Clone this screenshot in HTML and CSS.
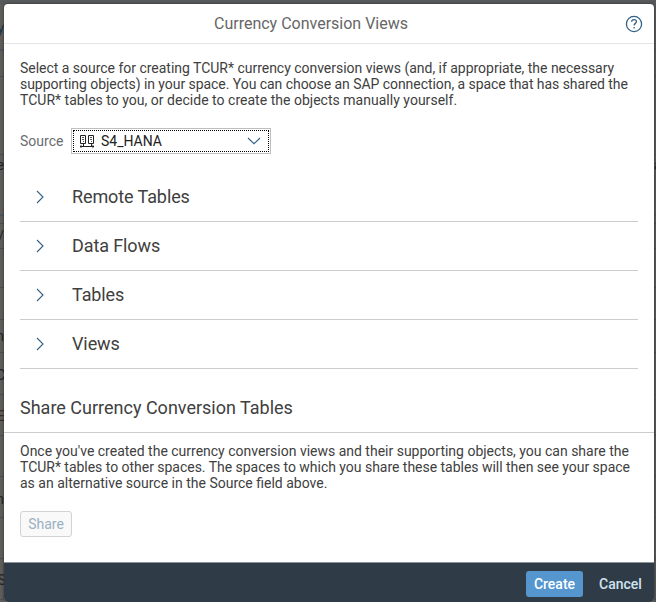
FILE: index.html
```html
<!DOCTYPE html>
<html lang="en">
<head>
<meta charset="utf-8">
<title>Currency Conversion Views</title>
<link rel="stylesheet" href="styles.css">
</head>
<body>
<div class="backdrop" aria-hidden="true">
  <i class="rule rule-blue r1"></i><i class="rule r2"></i><i class="rule r3"></i><i class="rule rule-blue r4"></i><i class="rule r5"></i><i class="rule r6"></i><i class="rule r7"></i><i class="rule r8"></i><i class="rule r9"></i><i class="rule r10"></i><i class="rule r11"></i><i class="rule r12"></i><i class="rule r13"></i><i class="rule r14"></i><i class="rule r15"></i>
  <span class="peek p1">y</span><span class="peek p2">e</span><span class="peek p3">/</span><span class="peek p4">n</span><span class="peek p5">C</span><span class="peek p6">E</span><span class="peek p7">n</span><span class="peek p8">S</span><span class="peek-right">a</span>
</div>
<main class="dialog">
  <header class="header">
    <h1 class="title">Currency Conversion Views</h1>
    <svg class="help" viewBox="0 0 18 18"><circle cx="9" cy="9" r="7.600"/><path d="M6.600 6.800C6.700 5.500 7.600 4.700 9 4.700c1.400 0 2.400.8 2.400 2 0 1.700-2.300 1.700-2.300 3.800"/><path d="M9.100 12.100v1.500"/></svg>
  </header>
  <section class="content">
    <p class="text"><span class="line l1">Select a source for creating TCUR* currency conversion views (and, if appropriate, the necessary</span> <span class="line l2">supporting objects) in your space. You can choose an SAP connection, a space that has shared the</span> <span class="line l3">TCUR* tables to you, or decide to create the objects manually yourself.</span></p>
    <div class="source">
      <span class="label">Source</span>
      <div class="select">
        <div class="select-focus">
          <svg class="db" viewBox="0 0 16 16"><path d="M1.500 2.500h5v8h-5zM9.500 2.500h5v8h-5zM4.500 10.500v3M12.500 10.500v3M1 13.500h14M2.500 12.300L1 13.500l1.500 1.200M13.500 12.300l1.500 1.200-1.500 1.200"/><path class="thin" d="M3 4.500h2M3 6.500h2M11 4.500h2M11 6.500h2M4 8.500h1M12 8.500h1"/></svg>
          <span class="value">S4_HANA</span>
          <svg class="down" viewBox="0 0 14 8"><path d="M1 1l6 5.700L13 1"/></svg>
        </div>
      </div>
    </div>
    <div class="panels">
      <div class="panel"><svg class="chev" viewBox="0 0 8 14"><path d="M1 1l6 6-6 6"/></svg><span class="name">Remote Tables</span></div>
      <div class="panel"><svg class="chev" viewBox="0 0 8 14"><path d="M1 1l6 6-6 6"/></svg><span class="name">Data Flows</span></div>
      <div class="panel"><svg class="chev" viewBox="0 0 8 14"><path d="M1 1l6 6-6 6"/></svg><span class="name">Tables</span></div>
      <div class="panel"><svg class="chev" viewBox="0 0 8 14"><path d="M1 1l6 6-6 6"/></svg><span class="name">Views</span></div>
    </div>
  </section>
  <h2 class="share-title">Share Currency Conversion Tables</h2>
  <section class="share">
    <p class="text"><span class="line l4">Once you've created the currency conversion views and their supporting objects, you can share the</span> <span class="line l5">TCUR* tables to other spaces. The spaces to which you share these tables will then see your space</span> <span class="line l6">as an alternative source in the Source field above.</span></p>
    <button class="share-btn" disabled>Share</button>
  </section>
  <footer class="footer">
    <button class="btn create">Create</button>
    <button class="btn cancel">Cancel</button>
  </footer>
</main>
</body>
</html>
```
FILE: styles.css
```css
* { box-sizing: border-box; }
body { margin: 0; width: 656px; height: 602px; overflow: hidden; font-family: Roboto, "Noto Sans", sans-serif; font-size: 14px; color: #404040; }
.backdrop { position: absolute; inset: 0; overflow: hidden; background: linear-gradient(90deg, #5f5d5a 0 4px, #58595b 4px); border-top: 4px solid #58595b; }
.rule { position: absolute; left: 0; width: 100%; height: 1px; background: #4e4e4f; }
.rule-blue { height: 2px; background: #4c555c; }
.r1 { top: 45px; } .r2 { top: 72px; } .r3 { top: 150px; } .r4 { top: 210px; } .r5 { top: 219px; } .r6 { top: 244px; } .r7 { top: 283px; } .r8 { top: 315px; } .r9 { top: 348px; } .r10 { top: 390px; } .r11 { top: 431px; } .r12 { top: 472px; } .r13 { top: 513px; } .r14 { top: 554px; } .r15 { top: 595px; }
.peek { position: absolute; right: 652px; line-height: 16px; color: #242424; }
.p1 { top: 16px; color: #1d3444; } .p2 { top: 153px; } .p3 { top: 224px; } .p4 { top: 324px; } .p5 { top: 363px; right: 651px; } .p6 { top: 404px; right: 651px; color: #3a2a24; } .p7 { top: 487px; } .p8 { top: 568px; right: 650px; }
.peek-right { position: absolute; left: 654px; top: 153px; line-height: 16px; color: #242424; }
.dialog { position: relative; margin: 4px 2px 0 4px; width: 650px; height: 598px; display: flex; flex-direction: column; background: #fff; border-radius: 4px; overflow: hidden; box-shadow: 0 0 3px rgba(0,0,0,.5); }
.header { height: 40px; flex: none; display: grid; grid-template-columns: 1fr 36px; align-items: center; border-bottom: 1px solid #e3e5e6; }
.title { justify-self: center; margin: 0; font-size: 16px; font-weight: 400; line-height: 20px; color: #666; white-space: nowrap; }
.help { width: 18px; height: 18px; margin-left: 7px; fill: none; stroke: #346187; stroke-width: 1.3; }
.content { height: 325px; flex: none; padding: 16px 16px 0; }
.text { margin: 0; line-height: 16px; }
.line { display: table; white-space: nowrap; }
.l1 { letter-spacing: -.02px; }
.l2 { letter-spacing: -.05px; }
.l3 { letter-spacing: .02px; }
.l4 { letter-spacing: -.005px; }
.l5 { letter-spacing: -.025px; }
.source { display: flex; align-items: center; height: 26px; margin-top: 20px; }
.label { width: 51px; color: #6a6d70; }
.select { width: 200px; height: 26px; border: 1px solid #bfbfbf; padding: 1px; }
.select-focus { height: 22px; border: 1px dotted #000; display: flex; align-items: center; padding: 0 7px 0 5px; }
.db { width: 16px; height: 16px; fill: none; stroke: #222; stroke-width: 1; }
.db .thin { stroke: #555; }
.value { margin-left: 6px; color: #222; }
.down { width: 14px; height: 8px; margin-left: auto; fill: none; stroke: #346187; stroke-width: 1.1; }
.panels { margin-top: 19px; }
.panel { height: 49px; display: flex; align-items: center; border-bottom: 1px solid #ccc; padding-left: 16px; }
.chev { width: 8px; height: 14px; fill: none; stroke: #346187; stroke-width: 1.1; }
.name { margin-left: 28px; font-size: 18px; line-height: 22px; letter-spacing: -.1px; }
.share-title { margin: 0; height: 64px; flex: none; padding: 28px 16px 0; font-size: 18px; font-weight: 400; line-height: 22px; border-bottom: 1px solid #ccc; }
.share { flex: 1; padding: 10px 16px 0; }
.share-btn { display: block; margin-top: 20px; width: 52px; height: 26px; padding: 0; border: 1px solid #cfd3d6; border-radius: 3px; background: #f9f9f9; font: 14px Roboto, sans-serif; color: #9bb0c2; }
.footer { height: 40px; flex: none; display: flex; justify-content: flex-end; align-items: flex-start; gap: 8px; padding: 8px 4px 0 0; background: #2f3c48; border-top: 1px solid #8a949b; }
.btn { height: 26px; padding: 0; border: 0; border-radius: 3px; font: 500 14px Roboto, sans-serif; }
.create { width: 57px; background: #5496cd; color: #fff; }
.cancel { width: 59px; background: none; color: #d1e2f0; }
```
